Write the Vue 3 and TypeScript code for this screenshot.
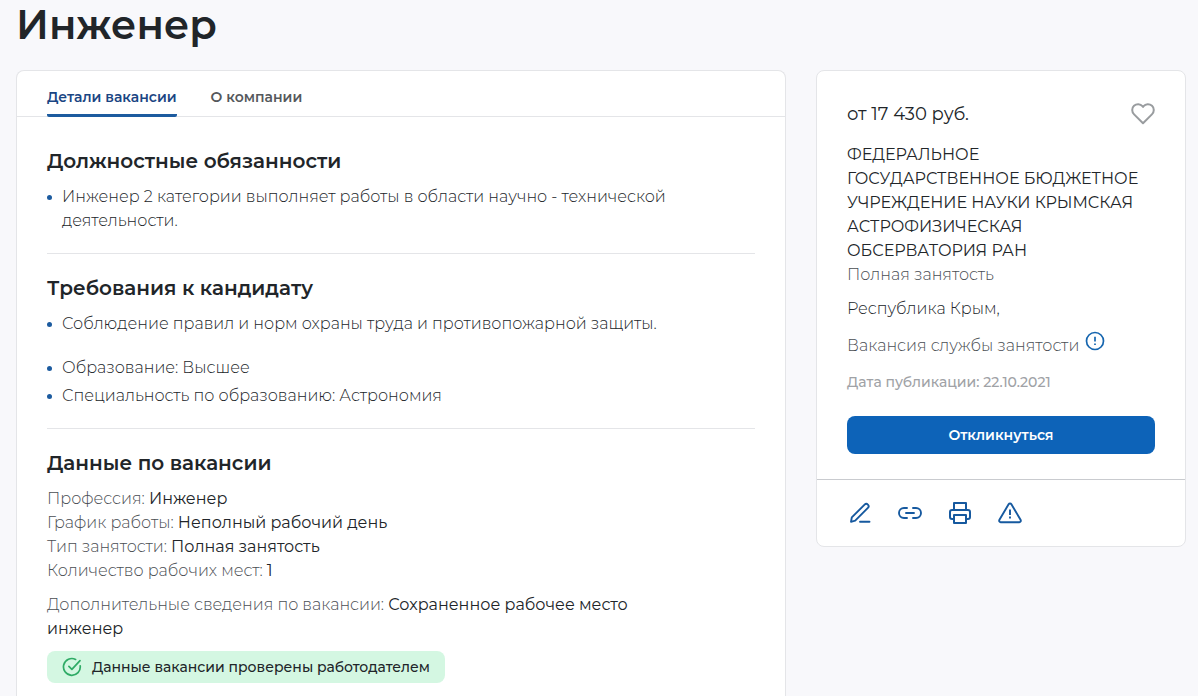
<script setup lang="ts">
import { ref } from 'vue'

interface Fact {
  label: string
  value: string
}

const tabs: string[] = ['Детали вакансии', 'О компании']
const activeTab = ref(0)
const liked = ref(false)

const duties: string[] = [
  'Инженер 2 категории выполняет работы в области научно - технической деятельности.',
]
const requirements: string[] = [
  'Соблюдение правил и норм охраны труда и противопожарной защиты.',
]
const education: string[] = [
  'Образование: Высшее',
  'Специальность по образованию: Астрономия',
]
const facts: Fact[] = [
  { label: 'Профессия:', value: 'Инженер' },
  { label: 'График работы:', value: 'Неполный рабочий день' },
  { label: 'Тип занятости:', value: 'Полная занятость' },
  { label: 'Количество рабочих мест:', value: '1' },
]
</script>

<template>
  <div class="page">
    <h1 class="title">Инженер</h1>
    <div class="columns">
      <main class="card details">
        <nav class="tabs">
          <button
            v-for="(tab, i) in tabs"
            :key="tab"
            type="button"
            class="tab"
            :class="{ active: activeTab === i }"
            @click="activeTab = i"
          >{{ tab }}</button>
        </nav>
        <div class="sections">
          <section class="section">
            <h2>Должностные обязанности</h2>
            <ul class="list">
              <li v-for="item in duties" :key="item">{{ item }}</li>
            </ul>
          </section>
          <section class="section">
            <h2>Требования к кандидату</h2>
            <ul class="list">
              <li v-for="item in requirements" :key="item">{{ item }}</li>
            </ul>
            <ul class="list second">
              <li v-for="item in education" :key="item">{{ item }}</li>
            </ul>
          </section>
          <section class="section">
            <h2>Данные по вакансии</h2>
            <p v-for="fact in facts" :key="fact.label" class="fact">
              <span class="label">{{ fact.label }}</span> {{ fact.value }}
            </p>
            <p class="fact extra">
              <span class="label">Дополнительные сведения по вакансии:</span> Сохраненное рабочее место<br />инженер
            </p>
            <div class="verified">
              <svg width="20" height="20" viewBox="0 0 20 20" fill="none" stroke="#2fab66" stroke-width="1.7" stroke-linecap="round" stroke-linejoin="round" aria-hidden="true">
                <path d="M18.2 8.8A8.4 8.4 0 1 1 13.6 2.4" />
                <path d="M6.900 9.400l3 3L18 3.600" />
              </svg>
              <span>Данные вакансии проверены работодателем</span>
            </div>
          </section>
        </div>
      </main>

      <aside class="card summary">
        <div class="info">
          <div class="salary-row">
            <span class="salary">от 17 430 руб.</span>
            <button type="button" class="icon-button" aria-label="В избранное" :aria-pressed="liked" @click="liked = !liked">
              <svg width="24" height="24" viewBox="0 0 24 24" fill="none" stroke="#999c9f" stroke-width="2" stroke-linejoin="round">
                <path d="M12 21.2L3.1 12.4C.6 9.900.6 6 3 3.800C5.500 1.500 9.400 1.700 11.400 4.200L12 4.900L12.600 4.200C14.600 1.700 18.500 1.500 21 3.800C23.400 6 23.400 9.900 20.900 12.400Z" />
              </svg>
            </button>
          </div>
          <p class="company">ФЕДЕРАЛЬНОЕ ГОСУДАРСТВЕННОЕ БЮДЖЕТНОЕ УЧРЕЖДЕНИЕ НАУКИ КРЫМСКАЯ АСТРОФИЗИЧЕСКАЯ ОБСЕРВАТОРИЯ РАН</p>
          <p class="text muted">Полная занятость</p>
          <p class="text region">Республика Крым,</p>
          <div class="source">
            <p class="text muted">Вакансия службы занятости</p>
            <button type="button" class="icon-button" aria-label="Подробнее">
              <svg width="20" height="20" viewBox="0 0 20 20" fill="none" stroke="#1565af" stroke-width="1.7">
                <circle cx="10" cy="10" r="8.500" />
                <path d="M10 5.800v4.800M10 12.400v1.600" />
              </svg>
            </button>
          </div>
          <p class="date">Дата публикации: 22.10.2021</p>
          <button type="button" class="respond">Откликнуться</button>
        </div>
        <div class="actions">
          <button type="button" class="icon-button" aria-label="Редактировать">
            <svg width="24" height="24" viewBox="0 0 24 24" fill="none" stroke="#16599f" stroke-width="1.900" stroke-linecap="round" stroke-linejoin="round">
              <path d="M3 20.800L3.800 16.400L16.600 3.600A2.300 2.300 0 0 1 19.900 6.900L7.200 19.700Z" />
              <path d="M12 20.800H21.500" />
            </svg>
          </button>
          <button type="button" class="icon-button" aria-label="Скопировать ссылку">
            <svg width="24" height="24" viewBox="0 0 24 24" fill="none" stroke="#16599f" stroke-width="1.900" stroke-linecap="round">
              <path d="M9 7H6A5 5 0 0 0 6 17H9M15 7H18A5 5 0 0 1 18 17H15M8 12H16" />
            </svg>
          </button>
          <button type="button" class="icon-button" aria-label="Распечатать">
            <svg width="24" height="24" viewBox="0 0 24 24" fill="none" stroke="#16599f" stroke-width="2" stroke-linejoin="round">
              <path d="M6 9V2H18V9M6 18H4A2 2 0 0 1 2 16V11A2 2 0 0 1 4 9H20A2 2 0 0 1 22 11V16A2 2 0 0 1 20 18H18M6 14H18V22H6Z" />
            </svg>
          </button>
          <button type="button" class="icon-button" aria-label="Пожаловаться">
            <svg width="24" height="24" viewBox="0 0 24 24" fill="none" stroke="#16599f" stroke-width="1.900" stroke-linejoin="round">
              <path d="M10.600 3.300L1.300 19A1.700 1.700 0 0 0 2.700 21.300H21.300A1.700 1.700 0 0 0 22.700 19L13.400 3.300A1.650 1.650 0 0 0 10.600 3.300Z" />
              <path d="M12 8.600v5.400M12 15.600v2" />
            </svg>
          </button>
        </div>
      </aside>
    </div>
  </div>
</template>

<style>
body {
  margin: 0;
  background: #f8f8fb;
}
</style>

<style scoped>
.page {
  box-sizing: border-box;
  min-height: 100vh;
  display: flex;
  flex-direction: column;
  padding: 0 12px 0 16px;
  font-family: Montserrat, Inter, "Open Sans", sans-serif;
  font-size: 16px;
  line-height: 24px;
  color: #212529;
}
h1,
h2,
p,
ul {
  margin: 0;
  padding: 0;
}
button {
  font-family: inherit;
  border: 0;
  padding: 0;
  background: none;
  cursor: pointer;
}
.title {
  font-size: 40px;
  line-height: 50px;
  font-weight: 600;
  margin-bottom: 20px;
}
.columns {
  flex: 1;
  display: grid;
  grid-template-columns: minmax(0, 1fr) 370px;
  gap: 30px;
}
.card {
  background: #fff;
  border: 1px solid #e4e5e8;
  border-radius: 8px;
}
.details {
  border-bottom: 0;
  border-radius: 8px 8px 0 0;
}
.tabs {
  display: flex;
  gap: 34px;
  padding: 0 30px;
  border-bottom: 1px solid #e4e5e8;
}
.tab {
  height: 46px;
  margin-bottom: -1px;
  padding-top: 9px;
  border-bottom: 3px solid transparent;
  border-radius: 2px;
  font-size: 14px;
  line-height: 20px;
  font-weight: 600;
  color: #55585c;
}
.tab.active {
  color: #1a4583;
  border-bottom-color: #1c5b9f;
}
.sections {
  padding: 10px 30px 12px;
}
.section {
  padding: 20px 0;
}
.section + .section {
  border-top: 1px solid #e4e5e8;
}
.section:last-child {
  padding-bottom: 0;
}
h2 {
  font-size: 20px;
  line-height: 28px;
  font-weight: 600;
  margin-bottom: 10px;
}
.list {
  list-style: none;
  display: flex;
  flex-direction: column;
  gap: 4px;
  font-weight: 300;
}
.list.second {
  margin-top: 20px;
}
.list li {
  display: grid;
  grid-template-columns: 5px minmax(0, 1fr);
  gap: 10px;
}
.list li::before {
  content: "";
  width: 5px;
  height: 5px;
  margin-top: 10px;
  border-radius: 50%;
  background: #1c5b9f;
}
.label {
  font-weight: 300;
  color: #4a4e53;
}
.extra {
  margin-top: 10px;
}
.verified {
  display: inline-flex;
  align-items: center;
  gap: 10px;
  height: 32px;
  margin-top: 10px;
  padding: 0 15px;
  border-radius: 8px;
  background: #d4f7e2;
  font-size: 14px;
  font-weight: 500;
  vertical-align: top;
}
.summary {
  align-self: start;
}
.info {
  padding: 29px 30px 25px;
}
.salary-row {
  display: flex;
  justify-content: space-between;
  align-items: center;
  margin-bottom: 15px;
}
.salary {
  font-size: 18px;
  line-height: 28px;
}
.icon-button {
  display: flex;
}
.text {
  font-weight: 300;
}
.muted {
  color: #4a4e53;
}
.region {
  margin-top: 10px;
}
.source {
  display: flex;
  align-items: flex-start;
  gap: 6px;
  padding-top: 10px;
}
.source .text {
  padding-top: 3px;
}
.date {
  margin-top: 14px;
  font-size: 14px;
  line-height: 20px;
  font-weight: 500;
  color: #a0a2a6;
}
.respond {
  width: 100%;
  height: 38px;
  margin-top: 24px;
  border-radius: 8px;
  background: #0d63b8;
  color: #fff;
  font-size: 14px;
  line-height: 20px;
  font-weight: 600;
}
.actions {
  display: flex;
  gap: 26px;
  padding: 21px 31px;
  border-top: 1px solid #c9cbcf;
}
</style>
